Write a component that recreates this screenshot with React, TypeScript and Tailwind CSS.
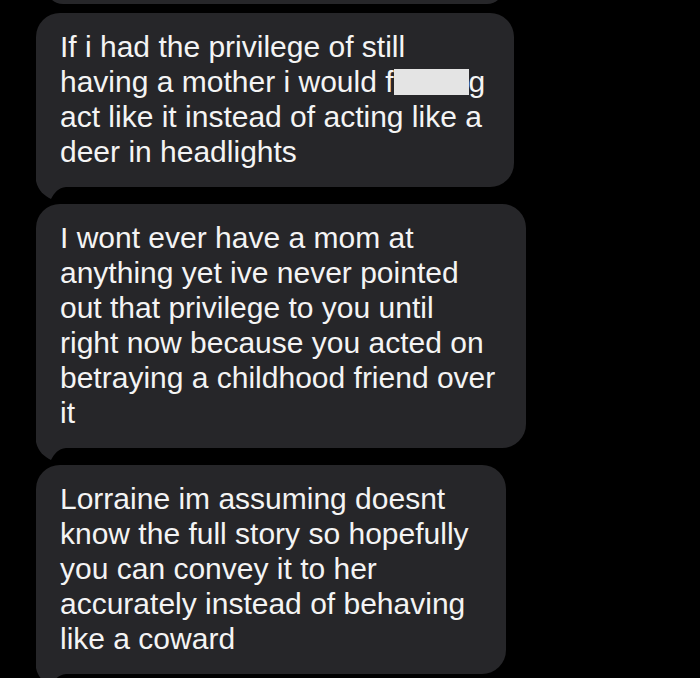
import type { ReactNode } from "react";

const bubbleFill = "#262629";

function Tail() {
  return (
    <svg
      className="absolute left-0 bottom-[-12px]"
      width="40"
      height="40"
      viewBox="0 0 40 40"
      aria-hidden
    >
      <path
        d="M0 0 H40 V28 H30 C22 29 19 33 15 40 C9 37 2 32 0 22 Z"
        fill={bubbleFill}
      />
    </svg>
  );
}

function Bubble({ width, lines }: { width: string; lines: ReactNode[] }) {
  return (
    <div className={`relative ml-[36px] rounded-[24px] bg-[#262629] pl-6 pt-4 pb-[18px] ${width}`}>
      <Tail />
      <div className="relative">
        {lines.map((line, i) => (
          <div key={i} className="whitespace-nowrap">
            {line}
          </div>
        ))}
      </div>
    </div>
  );
}

const redacted = (
  <>
    having a mother i would f
    <span className="inline-block h-[26px] w-[75px] bg-[#e4e4e4] align-[-3px]" />g
  </>
);

export default function App() {
  return (
    <div className="flex h-[678px] w-[700px] flex-col gap-[17px] overflow-hidden bg-black font-['Liberation_Sans',Arial,sans-serif] text-[30px] leading-[35px] text-[#f4f4f4]">
      {/* tail end of the message above */}
      <div className="-mt-[30px] mb-[-8px] ml-[46px] h-[34px] w-[458px] rounded-[24px] bg-[#262629]" />

      <Bubble
        width="w-[478px]"
        lines={[
          "If i had the privilege of still",
          redacted,
          "act like it instead of acting like a",
          "deer in headlights",
        ]}
      />

      <Bubble
        width="w-[490px]"
        lines={[
          "I wont ever have a mom at",
          "anything yet ive never pointed",
          "out that privilege to you until",
          "right now because you acted on",
          "betraying a childhood friend over",
          "it",
        ]}
      />

      <Bubble
        width="w-[470px]"
        lines={[
          "Lorraine im assuming doesnt",
          "know the full story so hopefully",
          "you can convey it to her",
          "accurately instead of behaving",
          "like a coward",
        ]}
      />
    </div>
  );
}
